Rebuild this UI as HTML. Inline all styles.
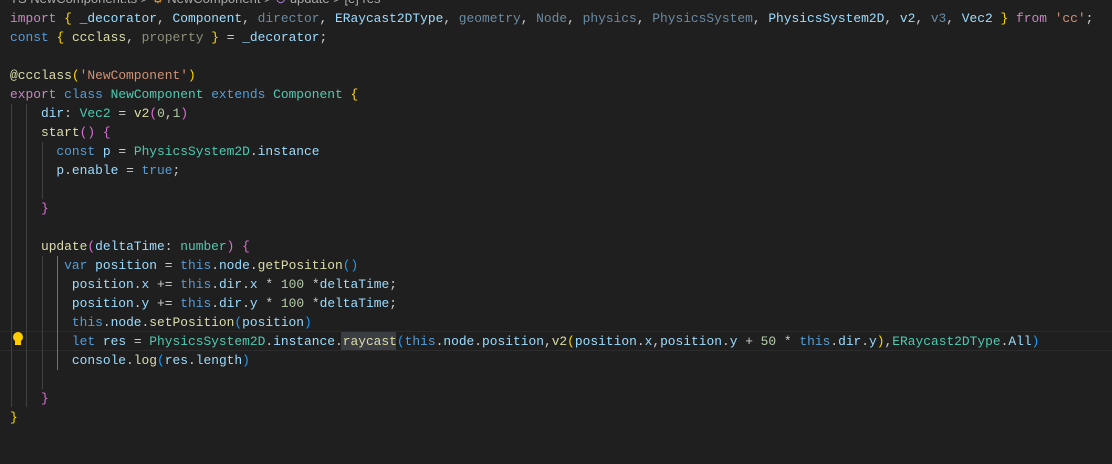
<!DOCTYPE html>
<html><head><meta charset="utf-8"><style>
html,body{margin:0;padding:0;background:#1f1f1f;width:1112px;height:464px;overflow:hidden;position:relative}
pre{position:absolute;left:10px;top:8.5px;margin:0;font-family:"Liberation Mono",monospace;font-size:12.9px;line-height:19px;color:#cccccc;white-space:pre}
.k{color:#c586c0}.b{color:#569cd6}.v{color:#9cdcfe}.d{color:#6a8aa3}.t{color:#4ec9b0}.f{color:#dcdcaa}.n{color:#b5cea8}.s{color:#ce9178}
.y{color:#ffd700}.p{color:#da70d6}.c{color:#179fff}.w{color:#d4d4d4}
.g{position:absolute;width:1px;background:#404040}
.bc{position:absolute;left:10px;top:-9px;font-family:"Liberation Sans",sans-serif;font-size:13px;color:#a9a9a9}
</style></head><body>
<div class="bc">TS NewComponent.ts &gt; <span style="color:#ee9d28">⚙</span> NewComponent &gt; <span style="color:#b180d7">⊙</span> update &gt; [e] res</div>
<div style="position:absolute;left:0;top:331px;width:1112px;height:18px;border-top:1px solid #2b2b2b;border-bottom:1px solid #2b2b2b"></div>
<div style="position:absolute;left:341px;top:332px;width:55px;height:18px;background:#3a3d41"></div>
<div class="g" style="left:11px;top:104px;height:303px"></div>
<div class="g" style="left:26px;top:104px;height:303px"></div>
<div class="g" style="left:42px;top:142px;height:57px"></div>
<div class="g" style="left:42px;top:256px;height:133px"></div>
<div class="g" style="left:57px;top:256px;height:114px;background:#707070"></div>
<div style="position:absolute;left:13px;top:332px;width:10px;height:10px;border-radius:50%;background:#ffcc00"></div>
<div style="position:absolute;left:15px;top:341px;width:6px;height:4px;background:#ffcc00"></div>
<pre><span class="k">import</span> <span class="y">{</span> <span class="v">_decorator</span>, <span class="v">Component</span>, <span class="d">director</span>, <span class="v">ERaycast2DType</span>, <span class="d">geometry</span>, <span class="d">Node</span>, <span class="d">physics</span>, <span class="d">PhysicsSystem</span>, <span class="v">PhysicsSystem2D</span>, <span class="v">v2</span>, <span class="d">v3</span>, <span class="v">Vec2</span> <span class="y">}</span> <span class="k">from</span> <span class="s">'cc'</span>;
<span class="b">const</span> <span class="y">{</span> <span class="f">ccclass</span>, <span class="d" style="color:#8f8f7a">property</span> <span class="y">}</span> = <span class="v">_decorator</span>;

<span class="f">@ccclass</span><span class="y">(</span><span class="s">'NewComponent'</span><span class="y">)</span>
<span class="k">export</span> <span class="b">class</span> <span class="t">NewComponent</span> <span class="b">extends</span> <span class="t">Component</span> <span class="y">{</span>
    <span class="v">dir</span>: <span class="t">Vec2</span> = <span class="f">v2</span><span class="p">(</span><span class="n">0</span>,<span class="n">1</span><span class="p">)</span>
    <span class="f">start</span><span class="p">()</span> <span class="p">{</span>
      <span class="b">const</span> <span class="v">p</span> = <span class="t">PhysicsSystem2D</span>.<span class="v">instance</span>
      <span class="v">p</span>.<span class="v">enable</span> = <span class="b">true</span>;

    <span class="p">}</span>

    <span class="f">update</span><span class="p">(</span><span class="v">deltaTime</span>: <span class="t">number</span><span class="p">)</span> <span class="p">{</span>
       <span class="b">var</span> <span class="v">position</span> = <span class="b">this</span>.<span class="v">node</span>.<span class="f">getPosition</span><span class="c">()</span>
        <span class="v">position</span>.<span class="v">x</span> += <span class="b">this</span>.<span class="v">dir</span>.<span class="v">x</span> * <span class="n">100</span> *<span class="v">deltaTime</span>;
        <span class="v">position</span>.<span class="v">y</span> += <span class="b">this</span>.<span class="v">dir</span>.<span class="v">y</span> * <span class="n">100</span> *<span class="v">deltaTime</span>;
        <span class="b">this</span>.<span class="v">node</span>.<span class="f">setPosition</span><span class="c">(</span><span class="v">position</span><span class="c">)</span>
        <span class="b">let</span> <span class="v">res</span> = <span class="t">PhysicsSystem2D</span>.<span class="v">instance</span>.<span class="f">raycast</span><span class="c">(</span><span class="b">this</span>.<span class="v">node</span>.<span class="v">position</span>,<span class="f">v2</span><span class="y">(</span><span class="v">position</span>.<span class="v">x</span>,<span class="v">position</span>.<span class="v">y</span> + <span class="n">50</span> * <span class="b">this</span>.<span class="v">dir</span>.<span class="v">y</span><span class="y">)</span>,<span class="t">ERaycast2DType</span>.<span class="v">All</span><span class="c">)</span>
        <span class="v">console</span>.<span class="f">log</span><span class="c">(</span><span class="v">res</span>.<span class="v">length</span><span class="c">)</span>

    <span class="p">}</span>
<span class="y">}</span></pre>
</body></html>
